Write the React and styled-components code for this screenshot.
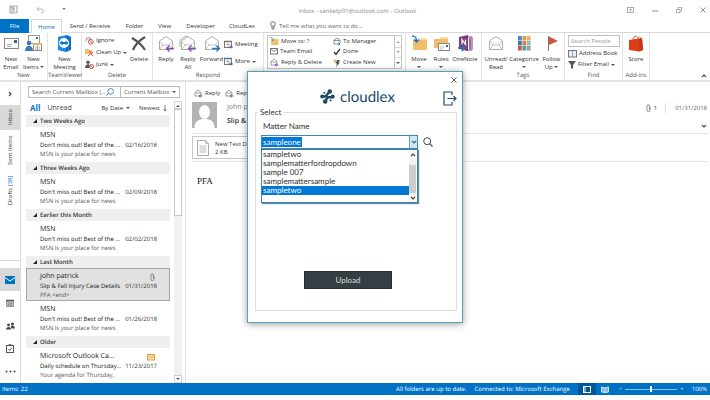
import React from "react";
import styled, { createGlobalStyle } from "styled-components";

const blue = "#0072c6";

const GlobalStyle = createGlobalStyle`
  * { box-sizing: border-box; }
  body { margin: 0; background: #fff; text-rendering: geometricPrecision; }
  button, input, select { font: inherit; color: inherit; border: 0; padding: 0; margin: 0; background: none; border-radius: 0; outline: 0; }
  svg { display: block; flex: none; }
`;

/* ---------- Shell ---------- */
const Page = styled.div`
  position: relative;
  display: flex;
  flex-direction: column;
  min-height: calc(100vh - 5px);
  font: 6px/8px "Open Sans", "Noto Sans", sans-serif;
  color: #333;
  white-space: nowrap;
  overflow: hidden;
`;

const TitleBar = styled.header`
  display: grid;
  grid-template-columns: 1fr auto 1fr;
  align-items: center;
  height: 19px;
  padding: 0 4px 0 9px;
  color: #888;
`;

const TitleTools = styled.div`
  display: flex;
  align-items: center;
  gap: ${(p) => p.$gap}px;
  justify-content: ${(p) => (p.$end ? "flex-end" : "flex-start")};
`;

const TitleText = styled.h1`
  margin: 0;
  font-size: 6px;
  font-weight: 400;
  line-height: 10px;
  padding: 2px 0 0;
`;

const IconButton = styled.button`
  display: flex;
  align-items: center;
  justify-content: center;
`;

const TabBar = styled.nav`
  display: flex;
  height: 14px;
  border-bottom: 1px solid #d8d8d8;
  line-height: 12px;
`;

const Tab = styled.button`
  width: ${(p) => p.$w}px;
  height: 14px;
  text-align: center;
  color: ${(p) => (p.$file ? "#fff" : p.$active ? blue : "#333")};
  background: ${(p) => (p.$file ? blue : p.$active ? "#fff" : "transparent")};
  border: ${(p) => (p.$active ? "1px solid #d8d8d8" : "0")};
  border-bottom: 0;
  margin-right: ${(p) => (p.$file ? 2 : 0)}px;
`;

const TellMe = styled.label`
  display: flex;
  align-items: center;
  gap: 3px;
  margin-left: 9px;
  input { width: 100px; }
  input::placeholder { color: #666; opacity: 1; }
`;

const Ribbon = styled.section`
  display: flex;
  height: 49px;
  border-bottom: 2px solid #e3e3e3;
`;

const Group = styled.div`
  display: flex;
  flex-direction: column;
  width: ${(p) => p.$w}px;
  padding-top: 2px;
  border-right: 1px solid #e4e4e4;
`;

const GroupBody = styled.div`
  display: flex;
  flex: 1;
  padding-left: ${(p) => p.$pad || 0}px;
`;

const GroupName = styled.div`
  height: 9px;
  text-align: center;
  line-height: 8px;
  color: #555;
`;

const BigButton = styled.button`
  display: flex;
  flex-direction: column;
  align-items: center;
  width: ${(p) => p.$w}px;
  line-height: 8px;
  white-space: pre;
  svg { margin-bottom: 3px; }
`;

const SmallStack = styled.div`
  display: flex;
  flex-direction: column;
  gap: ${(p) => p.$gap}px;
  padding-top: ${(p) => p.$top || 0}px;
  width: ${(p) => (p.$w ? `${p.$w}px` : "auto")};
`;

const SmallButton = styled.button`
  display: flex;
  align-items: center;
  gap: 2px;
  height: 9px;
  line-height: 9px;
`;

const Caret = styled.span`
  display: inline-block;
  width: 4px;
  border: solid transparent;
  border-width: 2px 2px 0;
  border-top-color: #555;
  margin: ${(p) => (p.$below ? "3px 0 0" : "1px 0")};
`;

const Gallery = styled.div`
  display: grid;
  grid-template-columns: 63px 1fr 7px;
  width: 135px;
  height: 34px;
  border: 1px solid #c6c6c6;
`;

const GalleryColumn = styled.div`
  display: flex;
  flex-direction: column;
  justify-content: space-around;
  padding-left: 2px;
`;

const GalleryScroll = styled.div`
  display: grid;
  grid-template-rows: repeat(3, 1fr);
  border-left: 1px solid #c6c6c6;
  button { display: flex; align-items: center; justify-content: center; }
  button + button { border-top: 1px solid #d6d6d6; }
`;

const PeopleSearch = styled.input`
  width: 52px;
  height: 12px;
  border: 1px solid #c0c0c0;
  padding: 0 2px;
  &::placeholder { color: #999; opacity: 1; }
`;

const Collapse = styled(IconButton)`
  margin-left: auto;
  align-self: flex-end;
  width: 12px;
  height: 9px;
`;

/* ---------- Work area ---------- */
const Body = styled.main`
  display: flex;
  flex: 1;
`;

const Rail = styled.nav`
  display: flex;
  flex-direction: column;
  width: 21px;
  border-right: 1px solid #dcdcdc;
`;

const RailExpand = styled(IconButton)`
  height: 23px;
`;

const RailFolder = styled.button`
  writing-mode: vertical-rl;
  transform: rotate(180deg);
  width: 20px;
  height: ${(p) => p.$h}px;
  line-height: 20px;
  text-align: center;
  background: ${(p) => (p.$active ? "#d9d9d9" : "transparent")};
  b { color: ${blue}; font-weight: 400; }
`;

const RailModules = styled.div`
  display: flex;
  flex-direction: column;
  margin-top: auto;
  padding-top: 7px;
  border-top: 1px solid #dcdcdc;
`;

const RailModule = styled(IconButton)`
  height: 23px;
  background: ${(p) => (p.$active ? "#d9d9d9" : "transparent")};
`;

const ListPane = styled.section`
  display: flex;
  flex-direction: column;
  width: 165px;
  border-right: 1px solid #e1e1e1;
`;

const SearchRow = styled.form`
  display: flex;
  height: 12px;
  margin: 4px 5px 0 7px;
  border: 1px solid #bbb;
`;

const MailSearch = styled.label`
  display: flex;
  align-items: center;
  width: 92px;
  padding: 0 6px 0 3px;
  border-right: 1px solid #bbb;
  input { flex: 1; min-width: 0; }
  input::placeholder { color: #555; opacity: 1; }
`;

const Scope = styled.label`
  display: flex;
  align-items: center;
  flex: 1;
  padding: 0 3px;
  select { flex: 1; min-width: 0; appearance: none; line-height: 8px; color: #555; }
`;

const ListBody = styled.div`
  display: flex;
  flex: 1;
  padding: 3px 3px 0 0;
`;

const ListContent = styled.div`
  width: 149px;
  padding-left: 5px;
`;

const Filters = styled.div`
  display: flex;
  align-items: center;
  height: 14px;
  padding-left: 4px;
`;

const Filter = styled.button`
  font-size: ${(p) => (p.$active ? 8 : 7)}px;
  margin-right: 7px;
  font-weight: ${(p) => (p.$active ? 700 : 400)};
  color: ${(p) => (p.$active ? blue : "#444")};
`;

const Sort = styled.button`
  display: flex;
  align-items: center;
  gap: 3px;
  margin-left: ${(p) => (p.$first ? "auto" : "9px")};
  margin-right: ${(p) => (p.$first ? 0 : 3)}px;
`;

const DateHeader = styled.h2`
  display: flex;
  align-items: center;
  gap: 3px;
  height: 12px;
  margin: 0;
  padding-left: 7px;
  background: #efefef;
  font-size: 6px;
  font-weight: 600;
`;

const Mail = styled.article`
  display: grid;
  grid-template-columns: 80px 1fr;
  grid-template-rows: 10px 9px 8px;
  height: ${(p) => (p.$selected ? 33 : 35)}px;
  padding: 3px 12px 0 13px;
  border: 1px solid ${(p) => (p.$selected ? "#a6a6a6" : "transparent")};
  background: ${(p) => (p.$selected ? "#e1e1e1" : "transparent")};
`;

const Sender = styled.span`
  font-size: 7px;
  line-height: 10px;
  color: #222;
`;

const MailIcon = styled.span`
  display: flex;
  justify-content: flex-end;
  align-items: center;
  padding-right: 2px;
`;

const Subject = styled.span`
  line-height: 9px;
  color: #111;
`;

const Received = styled.time`
  text-align: right;
  line-height: 9px;
`;

const Preview = styled.span`
  color: #555;
`;

const Scrollbar = styled.div`
  display: flex;
  flex-direction: column;
  width: ${(p) => p.$w || 8}px;
  background: #f1f1f1;
  button { height: 8px; display: flex; align-items: center; justify-content: center; border: 1px solid #d0d0d0; background: #fff; }
`;

const Thumb = styled.div`
  height: 107px;
  border: 1px solid #c6c6c6;
  background: #fff;
`;

const Spacer = styled.div`
  flex: 1;
`;

const Reading = styled.section`
  flex: 1;
  min-width: 0;
  padding: 7px 2px 0 6px;
`;

const Actions = styled.div`
  display: flex;
  gap: 5px;
  height: 13px;
  padding-left: 2px;
`;

const MessageHead = styled.div`
  display: flex;
  height: 32px;
  border-bottom: 1px solid #e4e4e4;
`;

const HeadText = styled.div`
  flex: 1;
  padding: 1px 0 0 10px;
  p { margin: 0 0 4px; font-size: 7px; line-height: 10px; color: #777; }
  h2 { margin: 0; line-height: 10px; font-size: 7px; font-weight: 600; color: #333; }
`;

const HeadMeta = styled.div`
  display: flex;
  flex-direction: column;
  align-items: flex-end;
  justify-content: space-between;
  padding: 1px 1px 4px 0;
  div { display: flex; align-items: center; gap: 3px; height: 10px; }
  time { border-left: 1px solid #ddd; padding-left: 9px; margin-left: 5px; line-height: 10px; color: #666; }
`;

const Attachments = styled.div`
  padding-top: 2px;
  height: 28px;
  border-bottom: 1px solid #e4e4e4;
`;

const Attachment = styled.button`
  display: flex;
  align-items: center;
  gap: 6px;
  width: 100px;
  height: 23px;
  padding: 0 4px;
  border: 1px solid #c6c6c6;
  text-align: left;
  line-height: 8px;
`;

const MessageBody = styled.p`
  margin: 13px 5px;
  font: 9px/12px "Liberation Serif", serif;
  color: #111;
`;

/* ---------- Status bar ---------- */
const StatusBar = styled.footer`
  display: flex;
  align-items: center;
  height: 12px;
  padding: 0 3px 0 2px;
  background: ${blue};
  color: #fff;
  span { margin-right: 8px; }
`;

const ViewButton = styled(IconButton)`
  width: 18px;
  height: 12px;
  background: ${(p) => (p.$active ? "#00569c" : "transparent")};
`;

const Zoom = styled.label`
  display: flex;
  align-items: center;
  gap: 3px;
  margin: 0 8px 0 5px;
  input {
    appearance: none;
    width: 52px;
    height: 6px;
    background: linear-gradient(#8fc0e6, #8fc0e6) no-repeat center / 100% 1px;
  }
  input::-webkit-slider-thumb { appearance: none; width: 2px; height: 6px; background: #fff; }
`;

/* ---------- Dialog ---------- */
const Dialog = styled.section`
  position: absolute;
  left: 247px;
  top: 71px;
  width: 216px;
  padding: 4px 5px 11px 7px;
  border: 1px solid #5b9dbd;
  background: #fff;
  box-shadow: 0 1px 7px rgba(0, 0, 0, 0.4);
  font: 8px/10px Lato, sans-serif;
  color: #333;
`;

const DialogClose = styled(IconButton)`
  margin-left: auto;
  width: 7px;
  height: 7px;
`;

const DialogHead = styled.div`
  display: grid;
  grid-template-columns: 1fr auto 1fr;
  align-items: center;
  height: 24px;
  color: #1b4a68;
`;

const Brand = styled.div`
  display: flex;
  align-items: center;
  grid-column: 2;
  gap: 5px;
  height: 20px;
  margin: 3px 0 0 3px;
  font-size: 15px;
  line-height: 18px;
`;

const Exit = styled(IconButton)`
  justify-self: end;
  margin-top: 7px;
`;

const Fieldset = styled.fieldset`
  display: flex;
  flex-direction: column;
  min-width: 0;
  margin: 0;
  padding: 4px 5px 21px 5px;
  border: 1px solid #dedede;
  legend { padding: 0 2px; margin-left: -3px; line-height: 10px; }
`;

const FieldLabel = styled.label`
  padding-left: 2px;
  line-height: 10px;
`;

const ComboRow = styled.div`
  display: flex;
  align-items: center;
  gap: 5px;
  margin-top: 4px;
`;

const Combo = styled.div`
  position: relative;
  display: flex;
  width: 157px;
  height: 14px;
  border: 1px solid #3f87b5;
  input {
    flex: 1;
    min-width: 0;
    padding-left: 1px;
    color: #fff;
    background: linear-gradient(#0078d7, #0078d7) no-repeat 0 center / 40px 10px;
  }
`;

const ComboArrow = styled(IconButton)`
  width: 8px;
  background: #cfe6f7;
  border-left: 1px solid #5ba3d0;
`;

const Options = styled.div`
  position: absolute;
  left: -1px;
  right: -1px;
  top: 13px;
  display: flex;
  border: 1px solid #3f7fa8;
  background: #fff;
  box-shadow: 1px 1px 1px #5c8fae;
  ul { flex: 1; margin: 0; padding: 0 0 7px; list-style: none; }
`;

const Option = styled.li`
  padding-left: 1px;
  height: 9px;
  line-height: 9px;
  color: ${(p) => (p.$selected ? "#fff" : "#333")};
  background: ${(p) => (p.$selected ? "#0078d7" : "transparent")};
`;

const OptionScroll = styled(Scrollbar)`
  margin-right: 1px;
  button { border: 0; height: 9px; background: #f4f4f4; }
`;

const OptionThumb = styled.div`
  height: 28px;
  margin-top: 6px;
  background: #cdcdcd;
`;

const Upload = styled.button`
  align-self: center;
  width: 88px;
  height: 18px;
  margin: 122px 16px 0 0;
  border: 1px solid #262f32;
  background: #353f43;
  color: #ddd;
`;

/* ---------- Icons ---------- */
const Svg = ({ w, h, children, ...rest }) => (
  <svg width={w} height={h} viewBox={`0 0 ${w} ${h}`} fill="none" aria-hidden="true" {...rest}>{children}</svg>
);
const Chevron = ({ d = "down", c = "#444" }) => (
  <Svg w={6} h={6}>
    <path d={{ down: "M1 2l2 2 2-2", up: "M1 4l2-2 2 2", right: "M2 1l2 2-2 2" }[d]} stroke={c} strokeWidth="1.1" />
  </Svg>
);
const Triangle = ({ up, c = "#555" }) => (
  <Svg w={4} h={3}><path d={up ? "M0 3l2-2 2 2z" : "M0 0h4l-2 2z"} fill={c} /></Svg>
);
const Cross = ({ s = 6, c = "#555", t = 1 }) => (
  <Svg w={s} h={s}><path d={`M.5 .5L${s - 0.5} ${s - 0.5}M${s - 0.5} .5L.5 ${s - 0.5}`} stroke={c} strokeWidth={t} /></Svg>
);
const OpenEnvelope = ({ all, arrow }) => (
  <Svg w={18} h={17}>
    {all && <path d="M1 12V5l6-4 2 1" stroke="#999" strokeWidth=".8" />}
    <path d="M2.5 14.5V6l6.500-4.500L15.500 6v8.500z" stroke="#999" strokeWidth=".8" fill="#fff" />
    <path d="M3 6.500l3 3.500h6l3-3.500M3 14l3-4M12 10l3 4" stroke="#aaa" strokeWidth=".7" />
    {arrow === "left" && <path d="M17 13.500H10M12.500 10.500l-3 3 3 3" stroke="#8a4db0" strokeWidth="1.400" />}
    {arrow === "right" && <path d="M9 13.500h7M13.500 10.500l3 3-3 3" stroke="#2b72b8" strokeWidth="1.400" />}
  </Svg>
);
const TinyReply = () => (
  <Svg w={9} h={9}>
    <path d="M1 7V3.500L4 1l3 2.500V7zM1 4h6" stroke="#888" strokeWidth=".8" />
    <path d="M8.500 7H5M6.500 5.500L5 7l1.500 1.500" stroke="#8a4db0" />
  </Svg>
);
const TinyForward = () => (
  <Svg w={8} h={9}>
    <path d="M1 7V3L4 1l3 2v3M1 3.500h6M1 7h2" stroke="#777" strokeWidth=".8" />
    <path d="M3.500 7h3.500M5.500 5.500L7 7 5.500 8.500" stroke="#2b72b8" />
  </Svg>
);
const Folder = ({ w = 17, h = 17 }) => (
  <svg width={w} height={h} viewBox="0 0 17 17" fill="none" aria-hidden="true">
    <path d="M2 5h6l1-2h7v12H2z" fill="#efbf6c" /><path d="M9 3h7v2H8z" fill="#f8dda6" />
    <path d="M1 1c4 0 4.500 2 4.500 5.500M3 4.500L5.500 7 8 4.500" stroke="#2b72b8" strokeWidth="1.500" />
  </svg>
);
const NewMail = () => (
  <Svg w={17} h={17}><rect x="1.500" y="3.500" width="14" height="10" stroke="#888" fill="#fff" /><path d="M4 9.500h5M4 11.500h4" stroke="#aaa" /><rect x="11" y="5" width="3" height="3" fill="#2d6cab" /></Svg>
);
const NewItems = () => (
  <Svg w={17} h={17}>
    <rect x="3.500" y=".5" width="11" height="8" stroke="#999" fill="#fff" /><rect x="11" y="2" width="2" height="2" fill="#2d6cab" />
    <rect x="8.500" y="8.500" width="8" height="7" stroke="#888" fill="#fff" /><path d="M8 9h9" stroke="#e8b065" strokeWidth="2" /><path d="M10 12h5M10 14h5M12.500 10v5" stroke="#999" strokeWidth=".7" />
    <circle cx="4" cy="8" r="2.300" fill="#3f79b5" /><path d="M0 16c0-7 8-7 8 0z" fill="#3f79b5" />
  </Svg>
);
const TeamViewer = () => (
  <Svg w={15} h={17}><path d="M1 2l9-2 4 2v13l-5 2-8-2z" fill="#0e72c8" /><path d="M1 2l8-1v15l-8-1z" fill="#1d8ee8" /><circle cx="7" cy="8" r="5" fill="#fff" /><path d="M2.500 8L5.500 5.500V7h3V5.500L11.500 8l-3 2.500V9h-3v1.500z" fill="#0e72c8" /></Svg>
);
const DeleteX = () => (
  <Svg w={16} h={17}><path d="M1 3c5 3 10 7 13 12M14 2C9 5 4 10 2 15" stroke="#555" strokeWidth="2.200" /></Svg>
);
const Ignore = () => (
  <Svg w={9} h={9}><path d="M1 6V2.500L3.500 1 6 2.500v2M1 3h5" stroke="#999" strokeWidth=".8" /><circle cx="5.800" cy="5.800" r="2.400" stroke="#d06040" /><path d="M4.300 4.300l3 3" stroke="#d06040" /></Svg>
);
const CleanUp = () => (
  <Svg w={9} h={9}><path d="M0 1h3l1 1h3v4H0z" fill="#efbf6c" /><path d="M4 3l4 5M8 4L3 8" stroke="#d0583c" /></Svg>
);
const Junk = () => (
  <Svg w={9} h={9}><circle cx="3" cy="2.300" r="1.700" fill="#555" /><path d="M0 8c0-5 6-5 6 0z" fill="#555" /><circle cx="6.500" cy="6.500" r="2" stroke="#c94f3c" fill="#fff" /><path d="M5 5l3 3" stroke="#c94f3c" strokeWidth=".8" /></Svg>
);
const Meeting = ({ more }) => (
  <Svg w={9} h={9}><rect x=".5" y="1.500" width="7" height="6" stroke="#777" fill="#fff" /><path d="M0 1.500h8" stroke={more ? "#4477aa" : "#777"} strokeWidth="1.500" /><path d="M2 4.500h4M4 3v4" stroke="#999" strokeWidth=".7" /><path d="M9 7H5.500M7 5.500L5.500 7 7 8.500" stroke={more ? "#2b72b8" : "#8a4db0"} /></Svg>
);
const Envelope = ({ c = "#777", w = 8, fill = "#fff" }) => (
  <svg width={w} height={w - 1} viewBox="0 0 8 7" fill="none" aria-hidden="true"><rect x=".5" y=".5" width="7" height="5.500" stroke={c} fill={fill} /><path d="M1 1.500l3 2 3-2" stroke={c} strokeWidth=".8" /></svg>
);
const Check = () => <Svg w={8} h={8}><path d="M1 4l2 2.500L7 1" stroke="#333" strokeWidth="1.300" /></Svg>;
const Bolt = () => <Svg w={8} h={8}><path d="M4 1h3L5.500 3.500H7L3 8l1-3.500H2.500z" fill="#555" /><path d="M2 0v4M0 2h4" stroke="#f0ad4e" /></Svg>;
const Rules = () => (
  <Svg w={17} h={17}><path d="M1 4h6l1-2h7v11H1z" fill="#efbf6c" /><path d="M8 2h7v2H7z" fill="#f8dda6" /><rect x="5.500" y="8.500" width="11" height="7" fill="#fff" stroke="#888" /><path d="M7 12h4M7 14h3" stroke="#aaa" strokeWidth=".8" /><rect x="13" y="10" width="2" height="2" fill="#2d6cab" /></Svg>
);
const OneNote = () => (
  <Svg w={17} h={17}><path d="M9 2h6v13H9z" fill="#fff" stroke="#80397b" /><path d="M13 3v11" stroke="#80397b" strokeWidth="1.500" /><path d="M2 2l9-2v16l-9-2z" fill="#80397b" /><path d="M5 9.500v-5l3.500 5v-5" stroke="#fff" strokeWidth="1.200" /><path d="M1 13h6M5 10l3 3-3 3" stroke="#2b72b8" strokeWidth="1.500" /></Svg>
);
const Categories = () => (
  <Svg w={15} h={17}>
    {["#4a87bd", "#e89b4a", "#efb45d", "#3f79ae", "#d9804a", "#8bbcd6", "#c85a54", "#56a18f", "#9a9a9a"].map((c, i) => (
      <rect key={i} x={1 + (i % 3) * 4.4} y={1 + Math.floor(i / 3) * 5} width="3.800" height="4.500" fill={c} />
    ))}
  </Svg>
);
const Flag = () => <Svg w={14} h={17}><path d="M3.500 1v15" stroke="#777" /><path d="M4 1.500l9 4.500-9 4z" fill="#d5543c" /></Svg>;
const Store = () => <Svg w={16} h={17}><path d="M5 5c0-5 5-5 5-1" stroke="#d66b43" /><path d="M10 4c0-3 3-3 3 0" stroke="#aaa" /><path d="M1 5l13-2 1 12-4 1.500L1 15z" fill="#dc3e15" /><path d="M11 4l3-1 1 12-4 1.500z" fill="#cb3510" /></Svg>;
const AddressBook = () => <Svg w={9} h={8}><rect x=".5" y=".5" width="8" height="6.500" stroke="#777" fill="#e6eef3" /><path d="M4.500 1v6" stroke="#8cabc0" /></Svg>;
const Funnel = () => <Svg w={8} h={8}><path d="M0 0h8L5 4v4L3 7V4z" fill="#555" /></Svg>;
const Clip = () => <Svg w={5} h={8}><path d="M4 2.500v3.700a1.500 1.500 0 01-3 0V2a1.200 1.200 0 012.400 0v3.800" stroke="#777" strokeWidth=".8" /></Svg>;
const Magnifier = ({ s = 8, c = "#2b72b8", left }) => (
  <svg width={s} height={s} viewBox="0 0 10 10" fill="none" aria-hidden="true">
    <g transform={left ? "translate(10 0) scale(-1 1)" : undefined}><circle cx="4.200" cy="4.200" r="3.500" stroke={c} strokeWidth="1" /><path d="M6.700 6.700L9.500 9.500" stroke={c} strokeWidth="1.200" /></g>
  </svg>
);
const Avatar = () => <Svg w={25} h={26}><path d="M0 0h25v26H0z" fill="#b3b3b3" /><ellipse cx="12.500" cy="10" rx="5.500" ry="7" fill="#fff" /><path d="M2.500 26c0-7 4-9 10-9s10 2 10 9z" fill="#fff" /></Svg>;
const Doc = () => <Svg w={12} h={16}><path d="M.5.500h8l3 3v12H.5z" stroke="#aaa" fill="#fff" /><path d="M8.500.500v3h3M2.500 6h7M2.500 8h7M2.500 10h7M2.500 12h7" stroke="#aaa" strokeWidth=".8" /></Svg>;
const CalendarIcon = () => <Svg w={8} h={8}><path d="M.5 1.500h7v6h-7z" fill="#ccc" stroke="#777" strokeWidth=".7" /><path d="M0 1.500h8" stroke="#555" strokeWidth="1.500" /><path d="M1 4h6M1 6h6M3 3v4M5 3v4" stroke="#777" strokeWidth=".6" /></Svg>;
const People = () => <Svg w={9} h={8}><circle cx="2.500" cy="3" r="1.400" fill="#444" /><path d="M0 7.500C0 4 5 4 5 7.500z" fill="#444" /><circle cx="6.500" cy="2" r="1.500" fill="#444" /><path d="M4.500 4.500C6 3 9 4 9 6.500H5.500z" fill="#444" /></Svg>;
const Tasks = () => <Svg w={8} h={9}><rect x=".5" y="1.500" width="7" height="7" stroke="#555" /><path d="M2.500 1h3" stroke="#555" strokeWidth="1.500" /><path d="M2.500 5l1.200 1.500L6 3.500" stroke="#555" /></Svg>;
const Dots = () => <Svg w={11} h={3}><circle cx="1.500" cy="1.500" r="1" fill="#444" /><circle cx="5.500" cy="1.500" r="1" fill="#444" /><circle cx="9.500" cy="1.500" r="1" fill="#444" /></Svg>;
const ExitIcon = () => <Svg w={14} h={15}><path d="M9 4V1H1v13h8v-3" stroke="#1c4e6e" strokeWidth="1.200" /><path d="M4.500 7.500H13M10.500 5l2.500 2.500L10.500 10" stroke="#1c4e6e" strokeWidth="1.200" /></Svg>;
const CloudlexMark = () => (
  <Svg w={15} h={15}>
    <g stroke="#1b4a68" strokeWidth="2.400" strokeLinecap="round" strokeLinejoin="round">
      <path d="M2.200 7.500h3.300L9.500 2.800" />
      <path d="M5.300 12.300l2.200-4h5" />
    </g>
    <g fill="#1b4a68">
      <circle cx="2.200" cy="7.500" r="2" /><circle cx="9.800" cy="2.500" r="2.300" /><circle cx="5.200" cy="12.500" r="2.300" /><circle cx="12.700" cy="7.500" r="2" />
      <circle cx="4.300" cy="3.800" r="1" /><circle cx="10.500" cy="11.500" r="1" />
    </g>
  </Svg>
);

/* ---------- Data ---------- */
const tabs = [["Send / Receive", 56], ["Folder", 33], ["View", 27], ["Developer", 45], ["CloudLex", 38]];
const sections = [
  { title: "Two Weeks Ago", mails: [["MSN", "Don't miss out! Best of the ...", "02/16/2018", "MSN is your place for news"]] },
  { title: "Three Weeks Ago", mails: [["MSN", "Don't miss out! Best of the ...", "02/09/2018", "MSN is your place for news"]] },
  { title: "Earlier this Month", mails: [["MSN", "Don't miss out! Best of the ...", "02/02/2018", "MSN is your place for news"]] },
  { title: "Last Month", mails: [
    ["john patrick", "Slip & Fall Injury Case Details", "01/31/2018", "PFA <end>", "clip"],
    ["MSN", "Don't miss out! Best of the ...", "01/26/2018", "MSN is your place for news"],
  ] },
  { title: "Older", mails: [["Microsoft Outlook Ca...", "Daily schedule on Thursday...", "11/23/2017", "Your agenda for  Thursday,", "mail"]] },
];
const matters = ["sampletwo", "samplematterfordropdown", "sample 007", "samplemattersample", "sampletwo"];

function RibbonBar() {
  return (
    <Ribbon>
      <Group $w={48}>
        <GroupBody>
          <BigButton $w={22}><NewMail />{"New\nEmail"}</BigButton>
          <BigButton $w={23}><NewItems /><span>{"New\nItems "}<Caret /></span></BigButton>
        </GroupBody>
        <GroupName>New</GroupName>
      </Group>
      <Group $w={34}>
        <GroupBody><BigButton $w={33}><TeamViewer />{"New\nMeeting"}</BigButton></GroupBody>
        <GroupName>TeamViewer</GroupName>
      </Group>
      <Group $w={71}>
        <GroupBody $pad={3}>
          <SmallStack $gap={3} $top={1} $w={43}>
            <SmallButton><Ignore />Ignore</SmallButton>
            <SmallButton><CleanUp />Clean Up<Caret /></SmallButton>
            <SmallButton><Junk />Junk<Caret /></SmallButton>
          </SmallStack>
          <BigButton $w={22}><DeleteX />Delete</BigButton>
        </GroupBody>
        <GroupName>Delete</GroupName>
      </Group>
      <Group $w={111}>
        <GroupBody $pad={2}>
          <BigButton $w={22}><OpenEnvelope arrow="left" />Reply</BigButton>
          <BigButton $w={22}><OpenEnvelope all arrow="left" />{"Reply\nAll"}</BigButton>
          <BigButton $w={25}><OpenEnvelope arrow="right" />Forward</BigButton>
          <SmallStack $gap={8} $top={5}>
            <SmallButton><Meeting />Meeting</SmallButton>
            <SmallButton><Meeting more />More<Caret /></SmallButton>
          </SmallStack>
        </GroupBody>
        <GroupName>Respond</GroupName>
      </Group>
      <Group $w={142}>
        <GroupBody $pad={3}>
          <Gallery>
            <GalleryColumn>
              <SmallButton><Folder w={9} h={9} />Move to: ?</SmallButton>
              <SmallButton><Envelope />Team Email</SmallButton>
              <SmallButton><TinyReply />Reply &amp; Delete</SmallButton>
            </GalleryColumn>
            <GalleryColumn>
              <SmallButton><TinyForward />To Manager</SmallButton>
              <SmallButton><Check />Done</SmallButton>
              <SmallButton><Bolt />Create New</SmallButton>
            </GalleryColumn>
            <GalleryScroll>
              <button aria-label="Previous steps"><Triangle up c="#aaa" /></button>
              <button aria-label="Next steps"><Triangle c="#aaa" /></button>
              <button aria-label="More steps"><Triangle /></button>
            </GalleryScroll>
          </Gallery>
        </GroupBody>
      </Group>
      <Group $w={76}>
        <GroupBody $pad={2}>
          <BigButton $w={22}><Folder />Move<Caret $below /></BigButton>
          <BigButton $w={22}><Rules />Rules<Caret $below /></BigButton>
          <BigButton $w={26}><OneNote />OneNote</BigButton>
        </GroupBody>
      </Group>
      <Group $w={83}>
        <GroupBody $pad={2}>
          <BigButton $w={24}><OpenEnvelope />{"Unread/\nRead"}</BigButton>
          <BigButton $w={32}><Categories />Categorize<Caret $below /></BigButton>
          <BigButton $w={23}><Flag /><span>{"Follow\nUp "}<Caret /></span></BigButton>
        </GroupBody>
        <GroupName>Tags</GroupName>
      </Group>
      <Group $w={58}>
        <GroupBody $pad={3}>
          <SmallStack $gap={2}>
            <PeopleSearch aria-label="Search People" placeholder="Search People" />
            <SmallButton><AddressBook />Address Book</SmallButton>
            <SmallButton><Funnel />Filter Email<Caret /></SmallButton>
          </SmallStack>
        </GroupBody>
        <GroupName>Find</GroupName>
      </Group>
      <Group $w={27}>
        <GroupBody><BigButton $w={26}><Store />Store</BigButton></GroupBody>
        <GroupName>Add-ins</GroupName>
      </Group>
      <Collapse aria-label="Collapse ribbon"><Chevron d="up" /></Collapse>
    </Ribbon>
  );
}

function MailList() {
  return (
    <ListPane>
      <SearchRow>
        <MailSearch><input aria-label="Search Current Mailbox" placeholder="Search Current Mailbox (..." /><Magnifier left /></MailSearch>
        <Scope><select aria-label="Search scope"><option>Current Mailbox</option></select><Triangle /></Scope>
      </SearchRow>
      <ListBody>
        <ListContent>
          <Filters>
            <Filter $active>All</Filter>
            <Filter>Unread</Filter>
            <Sort $first>By Date<Triangle /></Sort>
            <Sort>Newest<Svg w={4} h={7}><path d="M2 0v6M.5 4.500L2 6l1.500-1.500" stroke="#555" strokeWidth=".8" /></Svg></Sort>
          </Filters>
          {sections.map((s) => (
            <React.Fragment key={s.title}>
              <DateHeader><Svg w={4} h={4}><path d="M4 0v4H0z" fill="#222" /></Svg>{s.title}</DateHeader>
              {s.mails.map(([from, subject, date, preview, mark]) => (
                <Mail key={date} $selected={mark === "clip"}>
                  <Sender>{from}</Sender>
                  <MailIcon>{mark === "clip" && <Clip />}{mark === "mail" && <Envelope c="#dfa047" fill="#fae0ae" />}</MailIcon>
                  <Subject>{subject}</Subject>
                  <Received>{date}</Received>
                  <Preview>{preview}</Preview>
                </Mail>
              ))}
            </React.Fragment>
          ))}
        </ListContent>
        <Spacer />
        <Scrollbar>
          <button aria-label="Scroll up"><Triangle up /></button>
          <Thumb />
          <Spacer />
          <button aria-label="Scroll down"><Triangle /></button>
        </Scrollbar>
      </ListBody>
    </ListPane>
  );
}

function MatterDialog() {
  return (
    <Dialog role="dialog" aria-label="cloudlex">
      <DialogClose aria-label="Close"><Cross s={6} c="#333" t={0.8} /></DialogClose>
      <DialogHead>
        <Brand><CloudlexMark />cloudlex</Brand>
        <Exit aria-label="Sign out"><ExitIcon /></Exit>
      </DialogHead>
      <Fieldset>
        <legend>Select</legend>
        <FieldLabel htmlFor="matter">Matter Name</FieldLabel>
        <ComboRow>
          <Combo>
            <input id="matter" role="combobox" aria-expanded="true" aria-controls="matters" defaultValue="sampleone" />
            <ComboArrow aria-label="Show matters"><Chevron c="#35647f" /></ComboArrow>
            <Options>
              <ul id="matters" role="listbox">
                {matters.map((m, i) => <Option key={i} role="option" aria-selected={i === 4} $selected={i === 4}>{m}</Option>)}
              </ul>
              <OptionScroll $w={7}>
                <button aria-label="Scroll up"><Chevron d="up" /></button>
                <OptionThumb />
                <button aria-label="Scroll down"><Chevron /></button>
              </OptionScroll>
            </Options>
          </Combo>
          <IconButton aria-label="Search matters"><Magnifier s={10} c="#444" /></IconButton>
        </ComboRow>
        <Upload>Upload</Upload>
      </Fieldset>
    </Dialog>
  );
}

export default function App() {
  return (
    <Page>
      <GlobalStyle />
      <TitleBar>
        <TitleTools $gap={18}>
          <IconButton aria-label="Send and receive"><Svg w={9} h={9}><path d="M1 3V1h7v7H6M1 3h4v5H1z" stroke="#999" strokeWidth=".9" /><path d="M3 1v2h3M2 5h3M2 7h2" stroke="#999" strokeWidth=".8" /></Svg></IconButton>
          <IconButton aria-label="Undo"><Svg w={8} h={8}><path d="M3 1L1 3l2 2M1 3h4c3 0 3 4 0 4" stroke="#aaa" strokeWidth=".9" /></Svg></IconButton>
          <IconButton aria-label="Customize toolbar"><Triangle c="#5a8fae" /></IconButton>
        </TitleTools>
        <TitleText>Inbox - sanketp91@outlook.com - Outlook</TitleText>
        <TitleTools $gap={18} $end>
          <IconButton aria-label="Ribbon options"><Svg w={7} h={6}><rect x=".5" y=".5" width="6" height="5" stroke="#999" strokeWidth=".8" /><path d="M2 3l1.500-1L5 3M3.500 2v3" stroke="#999" strokeWidth=".7" /></Svg></IconButton>
          <IconButton aria-label="Minimize"><Svg w={6} h={6}><path d="M0 4h6" stroke="#888" /></Svg></IconButton>
          <IconButton aria-label="Restore"><Svg w={6} h={6}><path d="M.5 2.500h3.500v3H.5zM2 2V.5h3.500v3.500H4" stroke="#999" strokeWidth=".8" /></Svg></IconButton>
          <IconButton aria-label="Close"><Cross s={6} c="#888" t={0.9} /></IconButton>
        </TitleTools>
      </TitleBar>
      <TabBar>
        <Tab $w={29} $file>File</Tab>
        <Tab $w={31} $active>Home</Tab>
        {tabs.map(([name, w]) => <Tab key={name} $w={w}>{name}</Tab>)}
        <TellMe>
          <Svg w={6} h={9}><circle cx="3" cy="3" r="2.300" stroke="#555" strokeWidth=".8" /><path d="M2 5v3h2V5" stroke="#555" strokeWidth=".8" /></Svg>
          <input aria-label="Tell me" placeholder="Tell me what you want to do..." />
        </TellMe>
      </TabBar>
      <RibbonBar />
      <Body>
        <Rail>
          <RailExpand aria-label="Expand folders"><Chevron d="right" /></RailExpand>
          <RailFolder $h={25} $active>Inbox</RailFolder>
          <RailFolder $h={41}>Sent Items</RailFolder>
          <RailFolder $h={38}>Drafts <b>[38]</b></RailFolder>
          <RailModules>
            <RailModule $active aria-label="Mail"><Svg w={10} h={8}><rect width="10" height="8" fill={blue} /><path d="M0 1.500l5 3.500 5-3.500" stroke="#fff" /></Svg></RailModule>
            <RailModule aria-label="Calendar"><CalendarIcon /></RailModule>
            <RailModule aria-label="People"><People /></RailModule>
            <RailModule aria-label="Tasks"><Tasks /></RailModule>
            <RailModule aria-label="More"><Dots /></RailModule>
          </RailModules>
        </Rail>
        <MailList />
        <Reading>
          <Actions>
            <SmallButton><TinyReply />Reply</SmallButton>
            <SmallButton><TinyReply />Reply All</SmallButton>
          </Actions>
          <MessageHead>
            <Avatar />
            <HeadText>
              <p>john patrick</p>
              <h2>Slip &amp; Fall Injury Case Details</h2>
            </HeadText>
            <HeadMeta>
              <div><Clip />1<time>01/31/2018</time></div>
              <Chevron />
            </HeadMeta>
          </MessageHead>
          <Attachments>
            <Attachment><Doc /><span>New Text Document.txt<br />2 KB</span></Attachment>
          </Attachments>
          <MessageBody>PFA</MessageBody>
        </Reading>
      </Body>
      <StatusBar>
        <span>Items: 22</span>
        <Spacer />
        <span>All folders are up to date.</span>
        <span>Connected to: Microsoft Exchange</span>
        <ViewButton $active aria-label="Normal view"><Svg w={8} h={7}><rect x=".5" y=".5" width="7" height="6" stroke="#fff" /><path d="M2 1v5" stroke="#fff" /></Svg></ViewButton>
        <ViewButton aria-label="Reading view"><Svg w={8} h={7}><path d="M.5 1L4 2l3.500-1v5L4 6.500.5 6zM4 2v5" stroke="#cfe4f5" fill="#7eb4df" /></Svg></ViewButton>
        <Zoom>−<input type="range" aria-label="Zoom" defaultValue="50" />+</Zoom>
        100%
      </StatusBar>
      <MatterDialog />
    </Page>
  );
}
